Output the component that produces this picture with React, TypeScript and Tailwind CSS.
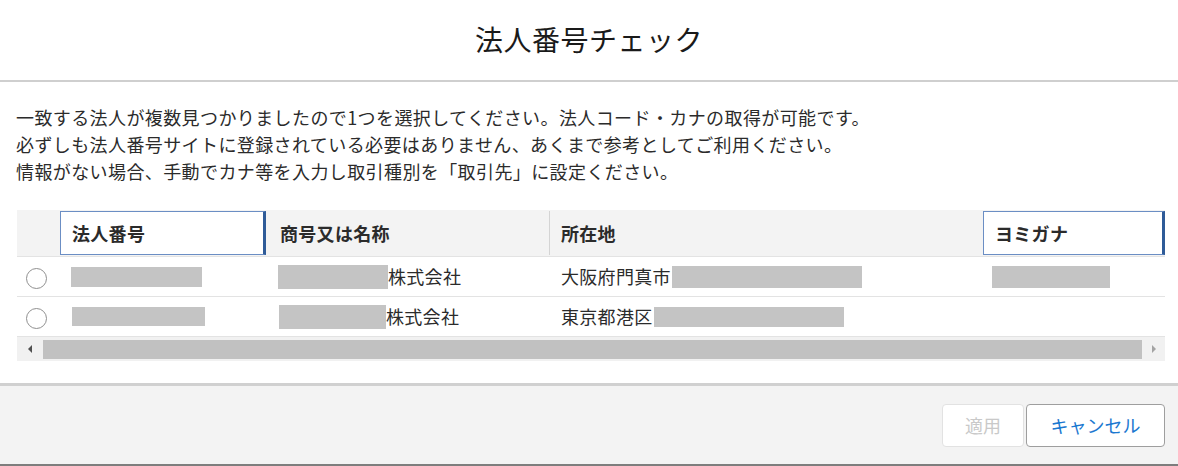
import React from "react";

const Block = ({ w, h = 20, ml = 0 }: { w: number; h?: number; ml?: number }) => (
  <span className="inline-block bg-[#c4c4c4] align-middle shrink-0" style={{ width: w, height: h, marginLeft: ml }} />
);

const Radio = () => (
  <span className="inline-block w-[21px] h-[21px] rounded-full border border-[#8f8f8f] bg-white" />
);

export default function App() {
  return (
    <div
      className="w-[1178px] h-[466px] bg-white flex flex-col text-[#333333] overflow-hidden"
      style={{ fontFamily: '"Noto Sans CJK JP", "Noto Sans", sans-serif' }}
    >
      {/* Header */}
      <div className="h-[82px] shrink-0 flex items-center justify-center border-b-2 border-[#cfcfcf]">
        <h2 className="text-[28px] tracking-[0.5px] leading-none text-[#1a1a1a] pb-[2px]">法人番号チェック</h2>
      </div>

      {/* Body */}
      <div className="flex-1 px-[16px] pt-[22px]">
        <div className="text-[18px] leading-[27px] text-[#2b2b2b] tracking-[0.4px]">
          <p>一致する法人が複数見つかりましたので1つを選択してください。法人コード・カナの取得が可能です。</p>
          <p>必ずしも法人番号サイトに登録されている必要はありません、あくまで参考としてご利用ください。</p>
          <p>情報がない場合、手動でカナ等を入力し取引種別を「取引先」に設定ください。</p>
        </div>

        <div className="mt-[25px] ml-[1px] w-[1148px] text-[18px] tracking-[0.3px] text-[#2b2b2b]">
          {/* Header row */}
          <div className="grid grid-cols-[43px_206px_283px_434px_182px] h-[47px] bg-[#f3f3f3] border-b border-[#e3e3e3]">
            <div />
            <div className="mt-[1px] h-[44px] bg-white border border-[#6b8ec4] border-r-[3px] border-r-[#2f5b98] flex items-center pl-[11px] font-bold">
              法人番号
            </div>
            <div className="flex items-center pl-[14px] font-bold">
              商号又は名称
            </div>
            <div className="my-[1px] border-l border-[#d4d4d4] flex items-center pl-[11px] font-bold">
              所在地
            </div>
            <div className="mt-[1px] h-[44px] bg-white border border-[#6b8ec4] border-r-[3px] border-r-[#2f5b98] flex items-center pl-[11px] font-bold">
              ヨミガナ
            </div>
          </div>

          {/* Row 1 */}
          <div className="grid grid-cols-[43px_206px_283px_434px_182px] h-[40px] border-b border-[#e3e3e3] items-center">
            <div className="flex items-center pl-[9px] pt-[3px]"><Radio /></div>
            <div className="pl-[11px] flex items-center"><Block w={131} h={20} /></div>
            <div className="pl-[12px] flex items-center"><Block w={110} h={24} /><span>株式会社</span></div>
            <div className="pl-[12px] flex items-center"><span>大阪府門真市</span><Block w={190} h={22} ml={1} /></div>
            <div className="pl-[9px] flex items-center"><Block w={118} h={22} /></div>
          </div>

          {/* Row 2 */}
          <div className="grid grid-cols-[43px_206px_283px_434px_182px] h-[40px] border-b border-[#e3e3e3] items-center">
            <div className="flex items-center pl-[9px] pt-[3px]"><Radio /></div>
            <div className="pl-[12px] flex items-center"><Block w={133} h={19} /></div>
            <div className="pl-[13px] flex items-center"><Block w={107} h={24} /><span>株式会社</span></div>
            <div className="pl-[12px] flex items-center"><span>東京都港区</span><Block w={190} h={20} ml={1} /></div>
            <div />
          </div>

          {/* Scrollbar */}
          <div className="h-[24px] bg-[#f1f1f1] flex items-center">
            <div className="w-[26px] flex items-center justify-center">
              <svg width="6" height="10" viewBox="0 0 6 10"><path d="M5 1 L1 5 L5 9 Z" fill="#505050" /></svg>
            </div>
            <div className="h-[19px] w-[1099px] bg-[#c1c1c1]" />
            <div className="flex-1 flex items-center justify-center">
              <svg width="6" height="10" viewBox="0 0 6 10"><path d="M1 1 L5 5 L1 9 Z" fill="#a3a3a3" /></svg>
            </div>
          </div>
        </div>
      </div>

      {/* Footer */}
      <div className="h-[83px] shrink-0 bg-[#f3f3f3] border-t-[3px] border-t-[#d0d0d0] border-b-2 border-b-[#7d7d7d] flex items-start justify-end pr-[13px] pt-[18px]">
        <div className="flex gap-[2px]">
          <button className="w-[82px] h-[43px] rounded-[4px] bg-white border border-[#e2e2e2] text-[18px] text-[#c9c9c9]">
            適用
          </button>
          <button className="w-[139px] h-[43px] rounded-[4px] bg-white border border-[#9e9e9e] text-[18px] text-[#1b78d0]">
            キャンセル
          </button>
        </div>
      </div>
    </div>
  );
}
